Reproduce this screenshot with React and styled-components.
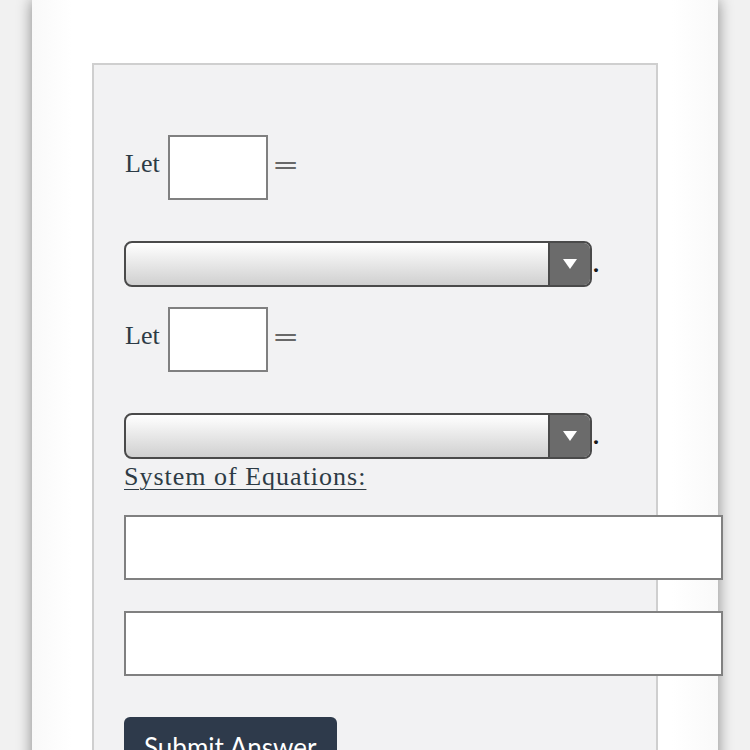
import React from "react";
import styled, { createGlobalStyle } from "styled-components";

const Global = createGlobalStyle`
  html, body { margin: 0; padding: 0; }
  body {
    background: #f1f1f1;
    overflow: hidden;
    font-family: "Liberation Serif", Georgia, serif;
  }
`;

const Page = styled.div`
  width: 750px;
  height: 750px;
  overflow: hidden;
  display: flex;
`;

const Card = styled.div`
  margin-left: 32px;
  width: 686px;
  min-height: 900px;
  background: linear-gradient(to right, #f9f9f9 0px, #ffffff 40px, #ffffff 640px, #f9f9f9 686px);
  box-shadow: 0 0 14px rgba(0, 0, 0, 0.45);
  padding: 63px 0 0 60px;
  box-sizing: border-box;
`;

const Panel = styled.div`
  width: 566px;
  min-height: 800px;
  box-sizing: border-box;
  background: #f2f2f3;
  border: 2px solid #cfcfcf;
  padding: 70px 0 0 30px;
  display: flex;
  flex-direction: column;
  align-items: flex-start;
`;

const LetRow = styled.div`
  display: flex;
  align-items: center;
  gap: 8px;
  color: #2d3b45;
  font-size: 26px;
  margin-top: ${(p) => p.$mt || 0}px;
`;

const Word = styled.span`
  padding-left: 1px;
  margin-top: -7px;
`;

const Box = styled.div`
  width: 100px;
  height: 65px;
  box-sizing: border-box;
  background: #ffffff;
  border: 2px solid #808080;
`;

const Equals = styled.span`
  display: inline-block;
  color: #686868;
  font-family: "DejaVu Serif", serif;
  font-size: 26px;
  transform: scaleX(1.25);
  transform-origin: left center;
  margin-top: -6px;
  margin-left: -4px;
`;

const SelectRow = styled.div`
  display: flex;
  align-items: flex-end;
  margin-top: ${(p) => p.$mt || 0}px;
`;

const Select = styled.div`
  width: 468px;
  height: 46px;
  box-sizing: border-box;
  border: 2px solid #4a4a4a;
  border-radius: 8px;
  overflow: hidden;
  display: flex;
  background: linear-gradient(to bottom, #ffffff 0%, #ececec 40%, #d0d0d0 100%);
`;

const SelectBody = styled.div`
  flex: 1;
`;

const Arrow = styled.div`
  width: 40px;
  border-left: 2px solid #4a4a4a;
  background: #6b6b6b;
  display: flex;
  align-items: center;
  justify-content: center;
`;

const Dot = styled.span`
  color: #1a1a1a;
  font-size: 24px;
  font-weight: bold;
  line-height: 1;
  margin-left: 1px;
  margin-bottom: 11px;
`;

const Heading = styled.div`
  margin-top: 2px;
  color: #2d3b45;
  font-size: 26px;
  letter-spacing: 1px;
  text-decoration: underline;
  text-underline-offset: 4px;
  text-decoration-thickness: 1px;
  line-height: 32px;
`;

const WideBox = styled.div`
  width: 599px;
  height: 65px;
  box-sizing: border-box;
  background: #ffffff;
  border: 2px solid #808080;
  margin-top: ${(p) => p.$mt || 0}px;
  position: relative;
  z-index: 1;
`;

const Button = styled.button`
  margin-top: 41px;
  width: 213px;
  height: 52px;
  border: none;
  border-radius: 6px;
  background: #2e3a4b;
  color: #ffffff;
  font-family: Lato, "Liberation Sans", sans-serif;
  font-size: 26px;
  line-height: 30px;
  padding: 15px 0 0 20px;
  display: flex;
  align-items: flex-start;
  justify-content: flex-start;
  white-space: nowrap;
`;

function Tri() {
  return (
    <svg width="16" height="12" viewBox="0 0 16 12">
      <polygon points="1,1 15,1 8,11" fill="#ffffff" />
    </svg>
  );
}

function LetLine({ mt }) {
  return (
    <LetRow $mt={mt}>
      <Word>Let</Word>
      <Box />
      <Equals>=</Equals>
    </LetRow>
  );
}

function Dropdown({ mt }) {
  return (
    <SelectRow $mt={mt}>
      <Select>
        <SelectBody />
        <Arrow>
          <Tri />
        </Arrow>
      </Select>
      <Dot>.</Dot>
    </SelectRow>
  );
}

export default function App() {
  return (
    <>
      <Global />
      <Page>
        <Card>
          <Panel>
            <LetLine mt={0} />
            <Dropdown mt={41} />
            <LetLine mt={20} />
            <Dropdown mt={41} />
            <Heading>System of Equations:</Heading>
            <WideBox $mt={22} />
            <WideBox $mt={31} />
            <Button>Submit Answer</Button>
          </Panel>
        </Card>
      </Page>
    </>
  );
}
